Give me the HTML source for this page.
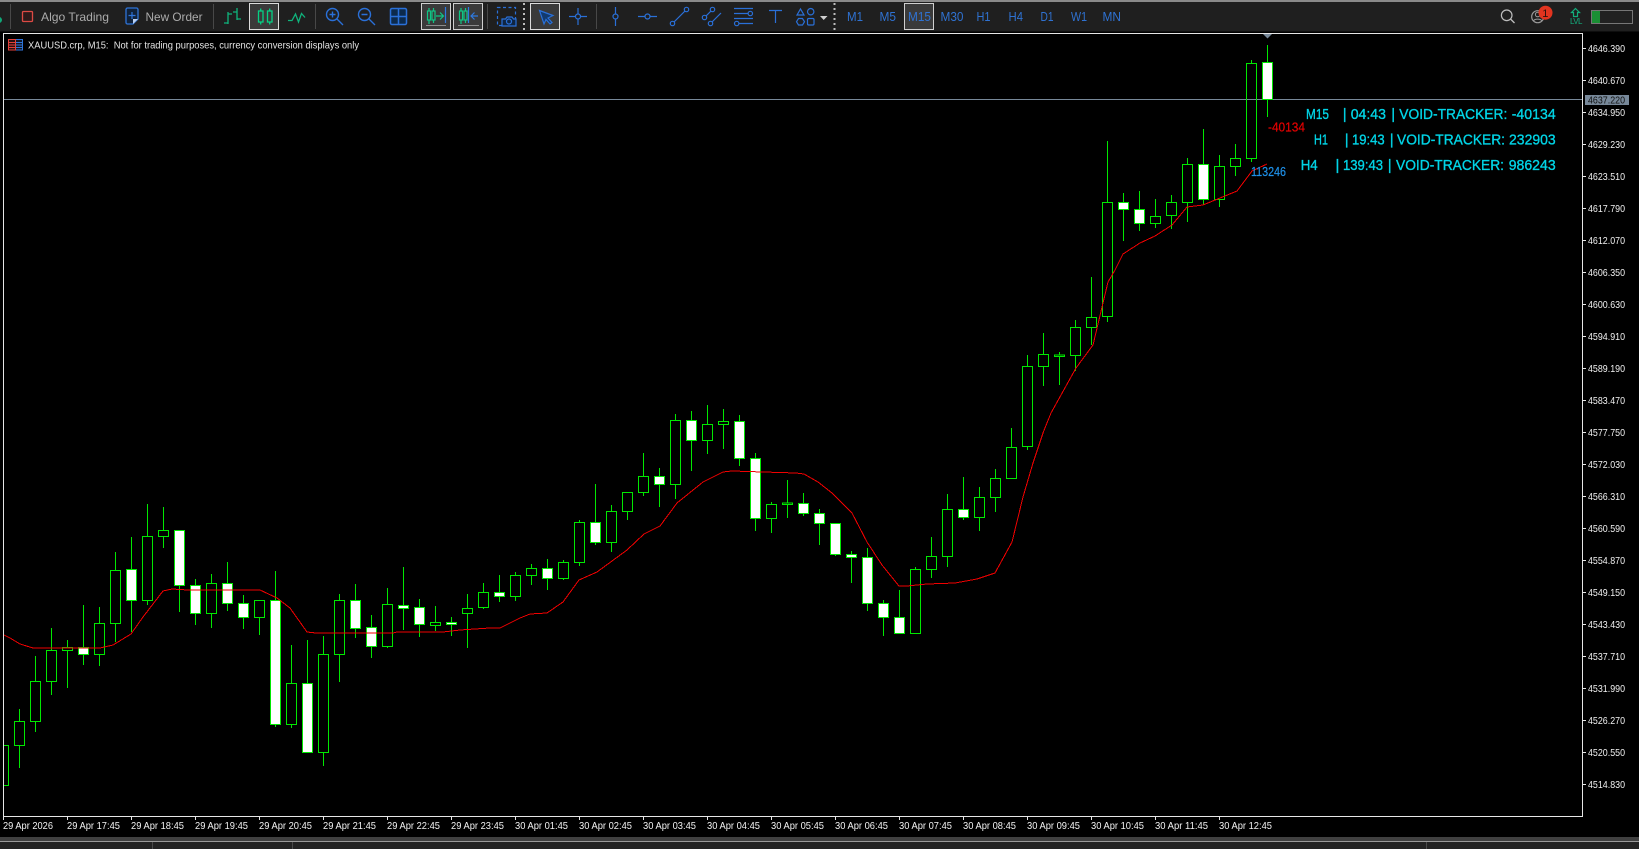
<!DOCTYPE html>
<html lang="en">
<head>
<meta charset="utf-8">
<title>XAUUSD.crp, M15</title>
<style>
html,body{margin:0;padding:0;width:1639px;height:849px;overflow:hidden;background:#000}
svg{display:block;font-family:"Liberation Sans",Arial,sans-serif}
</style>
</head>
<body>
<svg xmlns="http://www.w3.org/2000/svg" width="1639" height="849" viewBox="0 0 1639 849">
<defs><clipPath id="plot"><rect x="4" y="34" width="1578" height="782"/></clipPath></defs>
<rect width="1639" height="849" fill="#000"/>

<!-- toolbar -->
<rect width="1639" height="31" fill="#1f1f1f"/>
<rect width="1639" height="2" fill="#8a8a8a"/>
<rect y="31" width="1639" height="1" fill="#0e0e0e"/>
<circle cx="-1" cy="20" r="3" fill="#10a878"/>
<g stroke="#484848" stroke-width="1" shape-rendering="crispEdges">
<path d="M10.5 4V29M213.5 4V29M315.5 4V29M487.5 4V29M596.5 4V29"/>
</g>
<path d="M524 3V31M834.5 3V31" stroke="#bdbdbd" stroke-width="2" stroke-dasharray="2 3"/>

<!-- algo trading -->
<rect x="22.5" y="11.5" width="10" height="10" rx="1" fill="#2d1a1a" stroke="#dc4a44" stroke-width="1.3"/>
<text x="41" y="21" font-size="12" fill="#ababab" textLength="68" lengthAdjust="spacingAndGlyphs">Algo Trading</text>
<!-- new order -->
<path d="M126 9.5a1.5 1.5 0 0 1 1.5-1.5h9a1.5 1.5 0 0 1 1.5 1.5V19l-5 5h-5.500a1.500 1.500 0 0 1-1.500-1.500z" fill="#10223a" stroke="#2f74d8" stroke-width="1.300"/>
<path d="M138 19h-5v5z" fill="#bcd0ee"/>
<path d="M132 12v7M128.500 15.500h7" stroke="#2f74d8" stroke-width="1.200" fill="none"/>
<text x="145.500" y="21" font-size="12" fill="#ababab" textLength="57" lengthAdjust="spacingAndGlyphs">New Order</text>

<!-- chart type icons -->
<g fill="none" stroke="#0fb47c" stroke-width="1.300">
<path d="M228 12V24M224 23H228M228 14H232M237 8V20M233 12H237M237 19H241"/>
</g>
<rect x="249.500" y="3.500" width="29" height="26" fill="#3a3a3a" stroke="#dcdcdc"/>
<g fill="none" stroke="#05d184" stroke-width="1.300">
<rect x="258.500" y="11" width="4.500" height="11"/><path d="M260.700 8.500V11M260.700 22V24.500"/>
<rect x="267.500" y="11" width="4.500" height="11"/><path d="M269.700 8.500V11M269.700 22V24.500"/>
</g>
<path d="M288 20.500H292L295.500 14L298.500 22L301.500 13.500L305 17.500" fill="none" stroke="#0fb47c" stroke-width="1.300"/>

<!-- zoom and grid -->
<g fill="none" stroke="#2a70d8" stroke-width="1.400">
<circle cx="332.500" cy="14.500" r="6"/><path d="M337 19L343 25M329.500 14.500H335.500M332.500 11.500V17.500"/>
<circle cx="364.500" cy="14.500" r="6"/><path d="M369 19L375 25M361.500 14.500H367.500"/>
</g>
<rect x="390.500" y="8.500" width="16" height="16" rx="1.500" fill="#0c2a4c" stroke="#2a70d8" stroke-width="1.500"/>
<path d="M398.500 8.500V24.500M390.500 16.500H406.500" stroke="#2a70d8" stroke-width="1.500"/>

<!-- scroll / shift boxes -->
<rect x="421.500" y="3.500" width="29" height="26" fill="#3a3a3a" stroke="#cfcfcf"/>
<rect x="453.500" y="3.500" width="29" height="26" fill="#3a3a3a" stroke="#cfcfcf"/>
<g fill="none" stroke="#0fc684" stroke-width="1.200">
<rect x="427.500" y="11" width="3" height="9"/><path d="M429 8V11M429 20V24"/>
<rect x="432" y="11" width="3" height="9"/><path d="M433.500 8V11M433.500 20V23"/>
<path d="M436 16H443M440 12.500L443.500 16L440 19.500"/>
<rect x="459.500" y="11" width="3" height="9"/><path d="M461 8V11M461 20V24"/>
<rect x="464" y="11" width="3" height="9"/><path d="M465.500 8V11M465.500 20V23"/>
</g>
<path d="M445.500 7V23M468.500 7V23" stroke="#2f7ae0" stroke-width="1.200"/>
<path d="M478 16H471M474.500 12.500L471 16L474.500 19.500" fill="none" stroke="#2f7ae0" stroke-width="1.200"/>
<path d="M426 25.500H446M458 25.500H479" stroke="#8c8c8c" stroke-width="1"/>

<!-- camera -->
<rect x="497.500" y="7.500" width="18" height="18" fill="none" stroke="#2a70d8" stroke-width="1.200" stroke-dasharray="3 2.500"/>
<path d="M502 26V19h3.500l1.500-2h5l1.500 2h2.500v7z" fill="#0f2542" stroke="#2a70d8" stroke-width="1.200"/>
<circle cx="509" cy="21.500" r="2.500" fill="none" stroke="#2a70d8" stroke-width="1.200"/>

<!-- cursor -->
<rect x="530.500" y="3.500" width="29" height="26" fill="#3a3a3a" stroke="#dcdcdc"/>
<path d="M539.500 10.500L553 15.500L548 18L552 22.500L550 24L546 19.500L544 24z" fill="#123a6e" stroke="#2a70d8" stroke-width="1.200"/>

<!-- drawing tools -->
<g fill="none" stroke="#2a70d8" stroke-width="1.200">
<path d="M569 16.500H575.500M580.500 16.500H587M578 8V14M578 19V25"/><circle cx="578" cy="16.500" r="2.500"/>
<path d="M615.500 7V14M615.500 19V26"/><circle cx="615.500" cy="16.500" r="2.500"/>
<path d="M638 16.500H645M650 16.500H657"/><circle cx="647.500" cy="16.500" r="2.500"/>
<circle cx="672.500" cy="23.500" r="2.200"/><circle cx="686.500" cy="9.500" r="2.200"/><path d="M674 22L685 11"/>
<circle cx="704.500" cy="17.500" r="2.200"/><circle cx="712.500" cy="9.500" r="2.200"/><path d="M706 16L711 11"/>
<circle cx="710.500" cy="23.500" r="2.200"/><path d="M712 22L721 13"/>
<path d="M734 8.500H753M734 13.500H748M734 18.500H753M739 23.500H753"/>
<circle cx="750.300" cy="13.500" r="2.200"/><circle cx="736.700" cy="23.500" r="2.200"/>
<path d="M769 10.500H782M775.500 10.500V23"/>
<path d="M797 15L800.500 9L804 15z"/><circle cx="810.700" cy="11.700" r="3.200"/>
<path d="M798.500 18.500h4l2 3.200l-2 3.300h-4l-2-3.300z"/><rect x="807.500" y="18.500" width="6.500" height="6.500" rx="1.200"/>
</g>
<path d="M820 16H827.500L823.700 20z" fill="#cfcfcf"/>

<!-- timeframes -->
<rect x="904.500" y="3.500" width="29" height="26" fill="#3a3a3a" stroke="#cfcfcf"/>
<g font-size="12.500" fill="#2f72d2">
<text x="847" y="21" textLength="16" lengthAdjust="spacingAndGlyphs">M1</text>
<text x="879.500" y="21" textLength="16.500" lengthAdjust="spacingAndGlyphs">M5</text>
<text x="908" y="21" textLength="23" lengthAdjust="spacingAndGlyphs">M15</text>
<text x="940.500" y="21" textLength="23" lengthAdjust="spacingAndGlyphs">M30</text>
<text x="976.500" y="21" textLength="14" lengthAdjust="spacingAndGlyphs">H1</text>
<text x="1008.500" y="21" textLength="14.500" lengthAdjust="spacingAndGlyphs">H4</text>
<text x="1040.500" y="21" textLength="13" lengthAdjust="spacingAndGlyphs">D1</text>
<text x="1071" y="21" textLength="16" lengthAdjust="spacingAndGlyphs">W1</text>
<text x="1102.500" y="21" textLength="18.500" lengthAdjust="spacingAndGlyphs">MN</text>
</g>

<!-- top right -->
<circle cx="1506.700" cy="15.300" r="5.300" fill="none" stroke="#bdbdbd" stroke-width="1.200"/>
<path d="M1510.500 19L1514.500 23" stroke="#bdbdbd" stroke-width="1.300"/>
<circle cx="1537.700" cy="16.700" r="6" fill="none" stroke="#9a9a9a" stroke-width="1.200"/>
<circle cx="1537.700" cy="14.500" r="2.300" fill="none" stroke="#9a9a9a" stroke-width="1"/>
<path d="M1533.500 21c1-2.500 7-2.500 8.500 0" fill="none" stroke="#9a9a9a" stroke-width="1"/>
<circle cx="1545.500" cy="12.700" r="7" fill="#e2341f"/>
<text x="1545.300" y="16.800" font-size="11" fill="#2a120e" text-anchor="middle">1</text>
<path d="M1575.500 8.500L1579.500 12.500H1577.500V16.500H1573.500V12.500H1571.500z" fill="none" stroke="#13ad7c" stroke-width="1.200"/>
<text x="1570" y="24" font-size="8" fill="#13ad7c" textLength="12.500">LVL</text>
<rect x="1591.500" y="10.500" width="41" height="13" fill="#212121" stroke="#767676"/>
<rect x="1592" y="11" width="8" height="12" fill="#1a8f34"/>

<!-- chart frame -->
<g shape-rendering="crispEdges">
<path d="M3.500 33.500H1582.500V816.500H3.500z" fill="none" stroke="#e6e6e6"/>
<path d="M4 99.500H1582" stroke="#778899"/>
</g>

<!-- candles -->
<g clip-path="url(#plot)" shape-rendering="crispEdges" fill="none" stroke="#00e800" stroke-width="1">
<path d="M19.500 709V721M19.500 745V768M35.500 656V681M35.500 721V732M51.500 628V650M51.500 681V695M67.500 640V647M67.500 650V688M83.500 605V647M83.500 654V665M99.500 607V623M99.500 654V666M115.500 552V570M115.500 623V642M131.500 537V569M131.500 600V632M147.500 504V536M147.500 600V605M163.500 507V530M163.500 536V548M179.500 585V612M195.500 579V585M195.500 613V625M211.500 574V583M211.500 613V628M227.500 562V583M227.500 603V611M243.500 595V603M243.500 617V629M259.500 617V635M275.500 571V600M275.500 724V727M291.500 645V683M291.500 724V728M307.500 640V683M323.500 636V654M323.500 752V766M339.500 594V600M339.500 654V682M355.500 584V600M355.500 628V638M371.500 615V627M371.500 646V658M387.500 588V604M387.500 646V648M403.500 567V605M403.500 608V630M419.500 599V607M419.500 624V637M435.500 606V622M435.500 625V631M451.500 617V622M451.500 624V636M467.500 594V608M467.500 613V648M483.500 583V592M483.500 607V609M499.500 575V592M499.500 596V602M515.500 572V575M515.500 596V601M531.500 564V568M531.500 575V585M547.500 559V568M547.500 578V590M563.500 560V562M563.500 578V580M579.500 520V522M579.500 562V566M595.500 484V522M595.500 542V545M611.500 505V511M611.500 542V552M627.500 511V520M643.500 453V476M643.500 492V496M659.500 468V476M659.500 484V507M675.500 414V420M675.500 484V499M691.500 411V420M691.500 440V471M707.500 405V424M707.500 440V454M723.500 409V421M723.500 424V449M739.500 415V421M739.500 458V466M755.500 453V458M755.500 518V531M771.500 502V504M771.500 518V533M787.500 480V503M787.500 504V518M803.500 493V503M803.500 513V516M819.500 509V513M819.500 523V545M835.500 554V556M851.500 551V554M851.500 557V583M867.500 548V557M867.500 603V611M883.500 600V603M883.500 617V636M899.500 590V617M915.500 567V569M931.500 537V556M931.500 569V578M947.500 494V509M947.500 556V567M963.500 477V509M963.500 517V520M979.500 487V497M979.500 517V531M995.500 469V478M995.500 497V512M1011.500 428V447M1027.500 355V366M1027.500 446V450M1043.500 333V354M1043.500 366V386M1059.500 352V355M1059.500 356V385M1075.500 320V327M1075.500 355V371M1091.500 277V317M1091.500 327V345M1107.500 141V202M1107.500 316V322M1123.500 193V202M1123.500 209V241M1139.500 191V209M1139.500 223V231M1155.500 199V216M1155.500 223V228M1171.500 195V202M1171.500 215V229M1187.500 158V164M1187.500 202V222M1203.500 129V164M1203.500 199V205M1219.500 155V166M1219.500 199V207M1235.500 144V158M1235.500 166V176M1251.500 60V63M1251.500 158V162M1267.500 45V62M1267.500 99V117"/>
<!-- hollow -->
<path d="M-1.500 745.500h10v40h-10zM14.500 721.500h10v24h-10zM30.500 681.500h10v40h-10zM46.500 650.500h10v31h-10zM62.500 647.500h10v3h-10zM94.500 623.500h10v31h-10zM110.500 570.500h10v53h-10zM142.500 536.500h10v64h-10zM158.500 530.500h10v6h-10zM206.500 583.500h10v30h-10zM254.500 600.500h10v17h-10zM286.500 683.500h10v41h-10zM318.500 654.500h10v98h-10zM334.500 600.500h10v54h-10zM382.500 604.500h10v42h-10zM430.500 622.500h10v3h-10zM462.500 608.500h10v5h-10zM478.500 592.500h10v15h-10zM510.500 575.500h10v21h-10zM526.500 568.500h10v7h-10zM558.500 562.500h10v16h-10zM574.500 522.500h10v40h-10zM606.500 511.500h10v31h-10zM622.500 492.500h10v19h-10zM638.500 476.500h10v16h-10zM670.500 420.500h10v64h-10zM702.500 424.500h10v16h-10zM718.500 421.500h10v3h-10zM766.500 504.500h10v14h-10zM782.500 503h10v1.500h-10zM910.500 569.500h10v64h-10zM926.500 556.500h10v13h-10zM942.500 509.500h10v47h-10zM974.500 497.500h10v20h-10zM990.500 478.500h10v19h-10zM1006.500 447.500h10v31h-10zM1022.500 366.500h10v80h-10zM1038.500 354.500h10v12h-10zM1054.500 355h10v1.500h-10zM1070.500 327.500h10v28h-10zM1086.500 317.500h10v10h-10zM1102.500 202.500h10v114h-10zM1150.500 216.500h10v7h-10zM1166.500 202.500h10v13h-10zM1182.500 164.500h10v38h-10zM1214.500 166.500h10v33h-10zM1230.500 158.500h10v8h-10zM1246.500 63.500h10v95h-10z"/>
<!-- filled -->
<path fill="#fff" d="M78.500 647.500h10v7h-10zM126.500 569.500h10v31h-10zM174.500 530.500h10v55h-10zM190.500 585.500h10v28h-10zM222.500 583.500h10v20h-10zM238.500 603.500h10v14h-10zM270.500 600.500h10v124h-10zM302.500 683.500h10v69h-10zM350.500 600.500h10v28h-10zM366.500 627.500h10v19h-10zM398.500 605.500h10v3h-10zM414.500 607.500h10v17h-10zM446.500 622.500h10v2h-10zM494.500 592.500h10v4h-10zM542.500 568.500h10v10h-10zM590.500 522.500h10v20h-10zM654.500 476.500h10v8h-10zM686.500 420.500h10v20h-10zM734.500 421.500h10v37h-10zM750.500 458.500h10v60h-10zM798.500 503.500h10v10h-10zM814.500 513.500h10v10h-10zM830.500 523.500h10v31h-10zM846.500 554.500h10v3h-10zM862.500 557.500h10v46h-10zM878.500 603.500h10v14h-10zM894.500 617.500h10v16h-10zM958.500 509.500h10v8h-10zM1118.500 202.500h10v7h-10zM1134.500 209.500h10v14h-10zM1198.500 164.500h10v35h-10zM1262.500 62.500h10v37h-10z"/>
</g>

<!-- moving average -->
<polyline clip-path="url(#plot)" shape-rendering="crispEdges" fill="none" stroke="#f00000" stroke-width="1" points="4,635 10,638 20,644 33,648 50,648 100,648 113,645 131,634 143,617 163,591 172,589 188,590 260,590 277,598 290,608 307,632 316,633 350,633 393,633 397,632 443,632 460,630 475,629 490,628 500,628 520,618 530,614 547,613 563,602 579,580 597,572 627,550 644,534 660,526 677,503 703,482 713,477 723,472 732,471 763,472 796,473 804,474 818,482 832,493 852,513 867,542 882,565 899,586 907,586 927,584 955,583 977,579 995,573 1012,542 1023,497 1033,463 1043,433 1051,413 1076,368 1093,345 1108,282 1115,270 1123,254 1140,243 1155,236 1172,225 1187,207 1203,205 1220,198 1237,191 1252,171 1267,164"/>

<!-- top marker -->
<path d="M1263 34H1272L1267.500 38.500z" fill="#778899"/>

<!-- title -->
<rect x="8.500" y="39.500" width="14" height="10.500" fill="#101826" stroke="#2f74d8"/>
<rect x="8.500" y="39.500" width="7" height="10.500" fill="#2a1010" stroke="#e2413a"/>
<path d="M9 42.500H15M9 45H15M9 47.500H15" stroke="#e2413a"/><path d="M16 42.500H22M16 45H22M16 47.500H22" stroke="#2f74d8"/>
<text x="28" y="48.500" font-size="10.500" fill="#e4e4e4" textLength="331" lengthAdjust="spacingAndGlyphs">XAUUSD.crp, M15:&#160; Not for trading purposes, currency conversion displays only</text>

<!-- price axis ticks -->
<path shape-rendering="crispEdges" stroke="#e6e6e6" d="M1583 48.500h3M1583 80.500h3M1583 112.500h3M1583 144.500h3M1583 176.500h3M1583 208.500h3M1583 240.500h3M1583 272.500h3M1583 304.500h3M1583 336.500h3M1583 368.500h3M1583 400.500h3M1583 432.500h3M1583 464.500h3M1583 496.500h3M1583 528.500h3M1583 560.500h3M1583 592.500h3M1583 624.500h3M1583 656.500h3M1583 688.500h3M1583 720.500h3M1583 752.500h3M1583 784.500h3"/>
<g font-size="10.500" fill="#f2f2f2">
<text x="1588" y="52" textLength="37" lengthAdjust="spacingAndGlyphs">4646.390</text>
<text x="1588" y="84" textLength="37" lengthAdjust="spacingAndGlyphs">4640.670</text>
<text x="1588" y="116" textLength="37" lengthAdjust="spacingAndGlyphs">4634.950</text>
<text x="1588" y="148" textLength="37" lengthAdjust="spacingAndGlyphs">4629.230</text>
<text x="1588" y="180" textLength="37" lengthAdjust="spacingAndGlyphs">4623.510</text>
<text x="1588" y="212" textLength="37" lengthAdjust="spacingAndGlyphs">4617.790</text>
<text x="1588" y="244" textLength="37" lengthAdjust="spacingAndGlyphs">4612.070</text>
<text x="1588" y="276" textLength="37" lengthAdjust="spacingAndGlyphs">4606.350</text>
<text x="1588" y="308" textLength="37" lengthAdjust="spacingAndGlyphs">4600.630</text>
<text x="1588" y="340" textLength="37" lengthAdjust="spacingAndGlyphs">4594.910</text>
<text x="1588" y="372" textLength="37" lengthAdjust="spacingAndGlyphs">4589.190</text>
<text x="1588" y="404" textLength="37" lengthAdjust="spacingAndGlyphs">4583.470</text>
<text x="1588" y="436" textLength="37" lengthAdjust="spacingAndGlyphs">4577.750</text>
<text x="1588" y="468" textLength="37" lengthAdjust="spacingAndGlyphs">4572.030</text>
<text x="1588" y="500" textLength="37" lengthAdjust="spacingAndGlyphs">4566.310</text>
<text x="1588" y="532" textLength="37" lengthAdjust="spacingAndGlyphs">4560.590</text>
<text x="1588" y="564" textLength="37" lengthAdjust="spacingAndGlyphs">4554.870</text>
<text x="1588" y="596" textLength="37" lengthAdjust="spacingAndGlyphs">4549.150</text>
<text x="1588" y="628" textLength="37" lengthAdjust="spacingAndGlyphs">4543.430</text>
<text x="1588" y="660" textLength="37" lengthAdjust="spacingAndGlyphs">4537.710</text>
<text x="1588" y="692" textLength="37" lengthAdjust="spacingAndGlyphs">4531.990</text>
<text x="1588" y="724" textLength="37" lengthAdjust="spacingAndGlyphs">4526.270</text>
<text x="1588" y="756" textLength="37" lengthAdjust="spacingAndGlyphs">4520.550</text>
<text x="1588" y="788" textLength="37" lengthAdjust="spacingAndGlyphs">4514.830</text>
</g>
<rect x="1585" y="95" width="44" height="10" fill="#778899"/>
<text x="1588" y="103.500" font-size="10.500" fill="#101010" textLength="37" lengthAdjust="spacingAndGlyphs">4637.220</text>

<!-- time axis -->
<path shape-rendering="crispEdges" stroke="#e6e6e6" d="M3.500 817v3M67.500 817v3M131.500 817v3M195.500 817v3M259.500 817v3M323.500 817v3M387.500 817v3M451.500 817v3M515.500 817v3M579.500 817v3M643.500 817v3M707.500 817v3M771.500 817v3M835.500 817v3M899.500 817v3M963.500 817v3M1027.500 817v3M1091.500 817v3M1155.500 817v3M1219.500 817v3"/>
<g font-size="10.500" fill="#f2f2f2">
<text x="3" y="829" textLength="50" lengthAdjust="spacingAndGlyphs">29 Apr 2026</text>
<text x="67" y="829" textLength="53" lengthAdjust="spacingAndGlyphs">29 Apr 17:45</text>
<text x="131" y="829" textLength="53" lengthAdjust="spacingAndGlyphs">29 Apr 18:45</text>
<text x="195" y="829" textLength="53" lengthAdjust="spacingAndGlyphs">29 Apr 19:45</text>
<text x="259" y="829" textLength="53" lengthAdjust="spacingAndGlyphs">29 Apr 20:45</text>
<text x="323" y="829" textLength="53" lengthAdjust="spacingAndGlyphs">29 Apr 21:45</text>
<text x="387" y="829" textLength="53" lengthAdjust="spacingAndGlyphs">29 Apr 22:45</text>
<text x="451" y="829" textLength="53" lengthAdjust="spacingAndGlyphs">29 Apr 23:45</text>
<text x="515" y="829" textLength="53" lengthAdjust="spacingAndGlyphs">30 Apr 01:45</text>
<text x="579" y="829" textLength="53" lengthAdjust="spacingAndGlyphs">30 Apr 02:45</text>
<text x="643" y="829" textLength="53" lengthAdjust="spacingAndGlyphs">30 Apr 03:45</text>
<text x="707" y="829" textLength="53" lengthAdjust="spacingAndGlyphs">30 Apr 04:45</text>
<text x="771" y="829" textLength="53" lengthAdjust="spacingAndGlyphs">30 Apr 05:45</text>
<text x="835" y="829" textLength="53" lengthAdjust="spacingAndGlyphs">30 Apr 06:45</text>
<text x="899" y="829" textLength="53" lengthAdjust="spacingAndGlyphs">30 Apr 07:45</text>
<text x="963" y="829" textLength="53" lengthAdjust="spacingAndGlyphs">30 Apr 08:45</text>
<text x="1027" y="829" textLength="53" lengthAdjust="spacingAndGlyphs">30 Apr 09:45</text>
<text x="1091" y="829" textLength="53" lengthAdjust="spacingAndGlyphs">30 Apr 10:45</text>
<text x="1155" y="829" textLength="53" lengthAdjust="spacingAndGlyphs">30 Apr 11:45</text>
<text x="1219" y="829" textLength="53" lengthAdjust="spacingAndGlyphs">30 Apr 12:45</text>
</g>

<!-- tracker overlay -->
<g font-size="15" fill="#00d4e6" stroke="#00d4e6" stroke-width=".35">
<text x="1306" y="119" textLength="23" lengthAdjust="spacingAndGlyphs">M15</text>
<text x="1342.800" y="119">|</text>
<text x="1350.700" y="119" textLength="35.300" lengthAdjust="spacingAndGlyphs">04:43</text>
<text x="1391.300" y="119">|</text>
<text x="1399.300" y="119" textLength="108" lengthAdjust="spacingAndGlyphs">VOID-TRACKER:</text>
<text x="1511.700" y="119" textLength="44" lengthAdjust="spacingAndGlyphs">-40134</text>
<text x="1314" y="144.500" textLength="14" lengthAdjust="spacingAndGlyphs">H1</text>
<text x="1344.800" y="144.500">|</text>
<text x="1352" y="144.500" textLength="32.700" lengthAdjust="spacingAndGlyphs">19:43</text>
<text x="1389.800" y="144.500">|</text>
<text x="1397" y="144.500" textLength="108" lengthAdjust="spacingAndGlyphs">VOID-TRACKER:</text>
<text x="1509" y="144.500" textLength="46.700" lengthAdjust="spacingAndGlyphs">232903</text>
<text x="1300.700" y="170" textLength="17" lengthAdjust="spacingAndGlyphs">H4</text>
<text x="1335.500" y="170">|</text>
<text x="1343" y="170" textLength="40" lengthAdjust="spacingAndGlyphs">139:43</text>
<text x="1387.800" y="170">|</text>
<text x="1396" y="170" textLength="108" lengthAdjust="spacingAndGlyphs">VOID-TRACKER:</text>
<text x="1508.700" y="170" textLength="47" lengthAdjust="spacingAndGlyphs">986243</text>
</g>
<text x="1268" y="131.500" font-size="12.500" fill="#e40000" stroke="#e40000" stroke-width=".2" textLength="37" lengthAdjust="spacingAndGlyphs">-40134</text>
<text x="1251" y="176" font-size="12.500" fill="#1e90e8" stroke="#1e90e8" stroke-width=".2" textLength="35" lengthAdjust="spacingAndGlyphs">113246</text>

<!-- bottom bars -->
<rect y="837" width="1639" height="4" fill="#404040"/>
<rect y="841" width="1639" height="1" fill="#9a9a9a"/>
<rect y="842" width="1639" height="7" fill="#232323"/>
<path shape-rendering="crispEdges" stroke="#4a4a4a" d="M152.500 842V849M292.500 842V849M1426.500 842V849"/>
</svg>
</body>
</html>
